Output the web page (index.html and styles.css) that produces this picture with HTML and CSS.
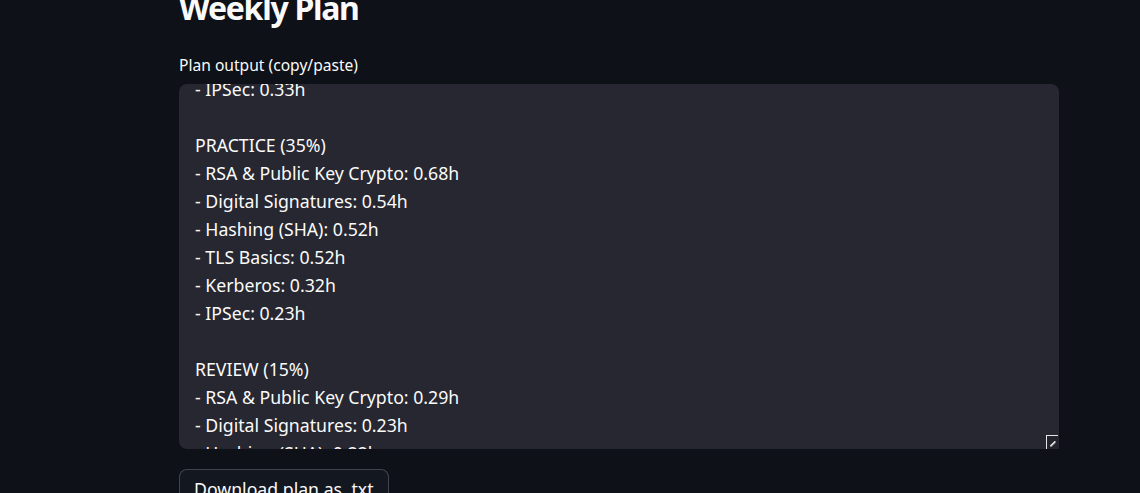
FILE: index.html
```html
<!DOCTYPE html>
<html lang="en">
<head>
<meta charset="utf-8">
<title>Weekly Plan</title>
<link rel="stylesheet" href="styles.css">
</head>
<body>
<main class="main">
  <h2 class="title">Weekly Plan</h2>
  <div class="field">
    <label class="label">Plan output (copy/paste)</label>
    <div class="textarea">
      <div class="text">- IPSec: 0.33h

PRACTICE (35%)
- RSA &amp; Public Key Crypto: 0.68h
- Digital Signatures: 0.54h
- Hashing (SHA): 0.52h
- TLS Basics: 0.52h
- Kerberos: 0.32h
- IPSec: 0.23h

REVIEW (15%)
- RSA &amp; Public Key Crypto: 0.29h
- Digital Signatures: 0.23h
- Hashing (SHA): 0.22h
- TLS Basics: 0.22h
- Kerberos: 0.14h
- IPSec: 0.10h</div>
      <span class="grip"><svg width="6" height="6" viewBox="0 0 6 6"><path d="M0.5 5.5 L5.5 0.5" stroke="#e8e8e8" stroke-width="2"/><path d="M1 6 L6 1" stroke="#777" stroke-width="1"/></svg></span>
    </div>
  </div>
  <button class="btn">Download plan as .txt</button>
</main>
</body>
</html>
```
FILE: styles.css
```css
html, body {
  margin: 0;
  padding: 0;
  background: #0e1117;
  overflow: hidden;
}
body {
  font-family: "Noto Sans", "Open Sans", sans-serif;
  color: #fafafa;
}
.main {
  width: 880px;
  margin-left: 179px;
  display: flex;
  flex-direction: column;
  align-items: flex-start;
}
.title {
  margin: -12px 0 0 0;
  font-size: 32px;
  font-weight: 700;
  line-height: 40px;
  letter-spacing: -1.3px;
}
.field {
  width: 100%;
  margin-top: 27px;
  display: flex;
  flex-direction: column;
  gap: 9px;
}
.label {
  font-size: 15.6px;
  line-height: 20px;
}
.textarea {
  position: relative;
  height: 365px;
  background: #262730;
  border-radius: 8px 8px 0 8px;
  overflow: hidden;
}
.text {
  margin-top: -9px;
  padding: 0 16px;
  white-space: pre;
  font-size: 17.7px;
  line-height: 28px;
}
.grip {
  position: absolute;
  right: 1px;
  bottom: 0;
  width: 12px;
  height: 14px;
  border-top: 1px solid #e6e6e6;
  border-left: 1px solid #e6e6e6;
  box-sizing: border-box;
  background: #24252c;
  display: flex;
  align-items: flex-start;
  justify-content: flex-end;
  padding: 5px 2px 0 0;
}
.grip svg { display: block; }
.btn {
  margin-top: 20px;
  padding: 5px 14px;
  background: #131720;
  color: #fafafa;
  border: 1px solid rgba(250, 250, 250, 0.2);
  border-radius: 8px;
  font-family: "Noto Sans", "Open Sans", sans-serif;
  font-size: 17.7px;
  line-height: 28px;
  min-height: 40px;
}
```
